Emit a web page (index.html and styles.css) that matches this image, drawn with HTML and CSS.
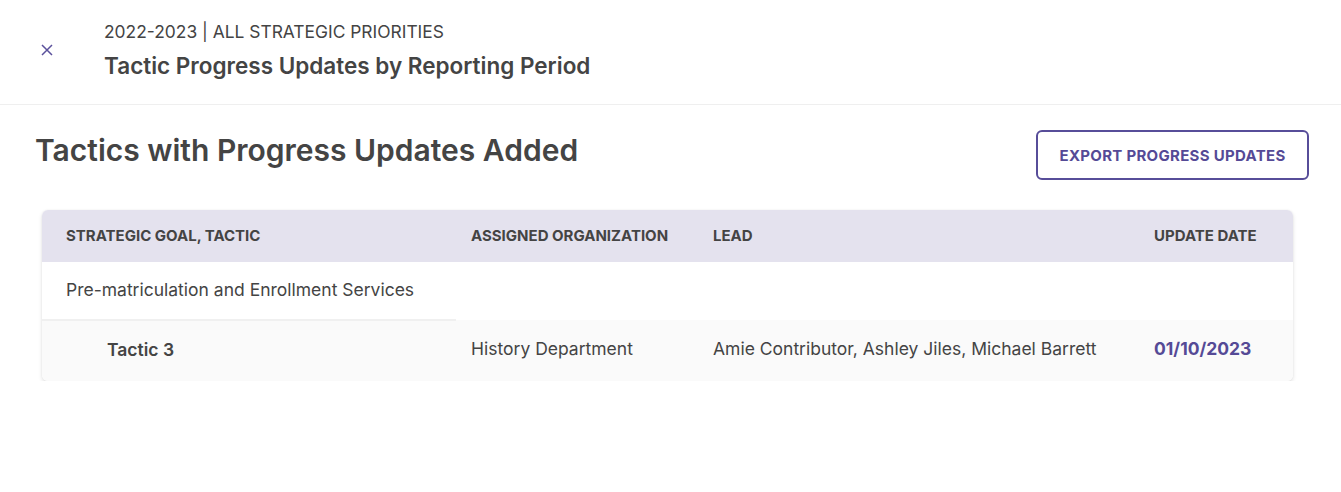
FILE: index.html
```html
<!DOCTYPE html>
<html>
<head>
<meta charset="utf-8">
<link rel="stylesheet" href="styles.css">
</head>
<body>
<header class="topbar">
  <button class="close" aria-label="Close">
    <svg width="12" height="12" viewBox="0 0 12 12"><path d="M1 1L11 11M11 1L1 11" stroke="#5b519c" stroke-width="1.5" fill="none"/></svg>
  </button>
  <div class="titles">
    <div class="kicker">2022-2023 | ALL STRATEGIC PRIORITIES</div>
    <div class="title">Tactic Progress Updates by Reporting Period</div>
  </div>
</header>
<main class="content">
  <div class="section-head">
    <h1>Tactics with Progress Updates Added</h1>
    <button class="export">EXPORT PROGRESS UPDATES</button>
  </div>
  <div class="card">
    <table class="grid">
      <thead>
        <tr>
          <th class="c1">STRATEGIC GOAL, TACTIC</th>
          <th class="c2">ASSIGNED ORGANIZATION</th>
          <th class="c3">LEAD</th>
          <th class="c4">UPDATE DATE</th>
        </tr>
      </thead>
      <tbody>
        <tr class="group">
          <td class="c1 goal">Pre-matriculation and Enrollment Services</td>
          <td></td><td></td><td></td>
        </tr>
        <tr class="tactic">
          <td class="c1 name">Tactic 3</td>
          <td>History Department</td>
          <td>Amie Contributor, Ashley Jiles, Michael Barrett</td>
          <td class="date">01/10/2023</td>
        </tr>
      </tbody>
    </table>
  </div>
</main>
</body>
</html>
```
FILE: styles.css
```css
* { box-sizing: border-box; }
html, body { margin: 0; padding: 0; background: #fff; }
body { font-family: Inter, "Noto Sans", sans-serif; color: #444; }

.topbar {
  display: flex;
  align-items: center;
  height: 105px;
  border-bottom: 1px solid #efefef;
  padding-left: 40px;
}
.close {
  border: 0; background: none; padding: 0;
  width: 14px; height: 14px;
  display: flex; align-items: center; justify-content: center;
  margin-right: 50px;
  margin-top: -4px;
}
.titles { display: flex; flex-direction: column; gap: 10px; margin-top: -5px; }
.kicker { font-size: 17.4px; color: #444; }
.title { font-size: 22.5px; font-weight: 600; color: #444; }

.content { padding: 25px 32px 0 35px; }
.section-head {
  display: flex; justify-content: space-between; align-items: center;
}
.section-head h1 {
  margin: 0 0 10px; font-size: 30px; font-weight: 600; color: #444;
}
.export {
  height: 50px; width: 273px;
  border: 2px solid #574d99; border-radius: 6px;
  background: #fff; color: #554a96;
  font-family: Inter, sans-serif; font-size: 15px; font-weight: 700;
  letter-spacing: 0.3px;
}

.card {
  margin: 30px 16px 0 7px;
  border-radius: 6px;
  box-shadow: 0 2px 4px rgba(0,0,0,0.12), 0 0 2px rgba(0,0,0,0.06);
  overflow: hidden;
}
.grid { width: 100%; border-collapse: collapse; table-layout: fixed; }
.grid th {
  background: #e4e2ee; height: 52px; text-align: left;
  font-size: 15px; font-weight: 700; color: #444; padding: 0 15px 1px;
}
.grid td { font-size: 17.5px; color: #444; padding: 0 15px; }
.grid .c1 { width: 414px; padding-left: 24px; }
.grid .c2 { width: 242px; }
.grid .c3 { width: 441px; }
.group td { height: 58px; background: #fff; padding-bottom: 2px; }
.group td.goal { border-bottom: 2px solid #f0f0f0; }
.tactic td { height: 61px; background: #fafafa; padding-bottom: 4px; }
.tactic td.name { font-weight: 600; padding-left: 65px; }
.tactic td.date { font-weight: 700; color: #554a96; font-size: 17.5px; }
```
